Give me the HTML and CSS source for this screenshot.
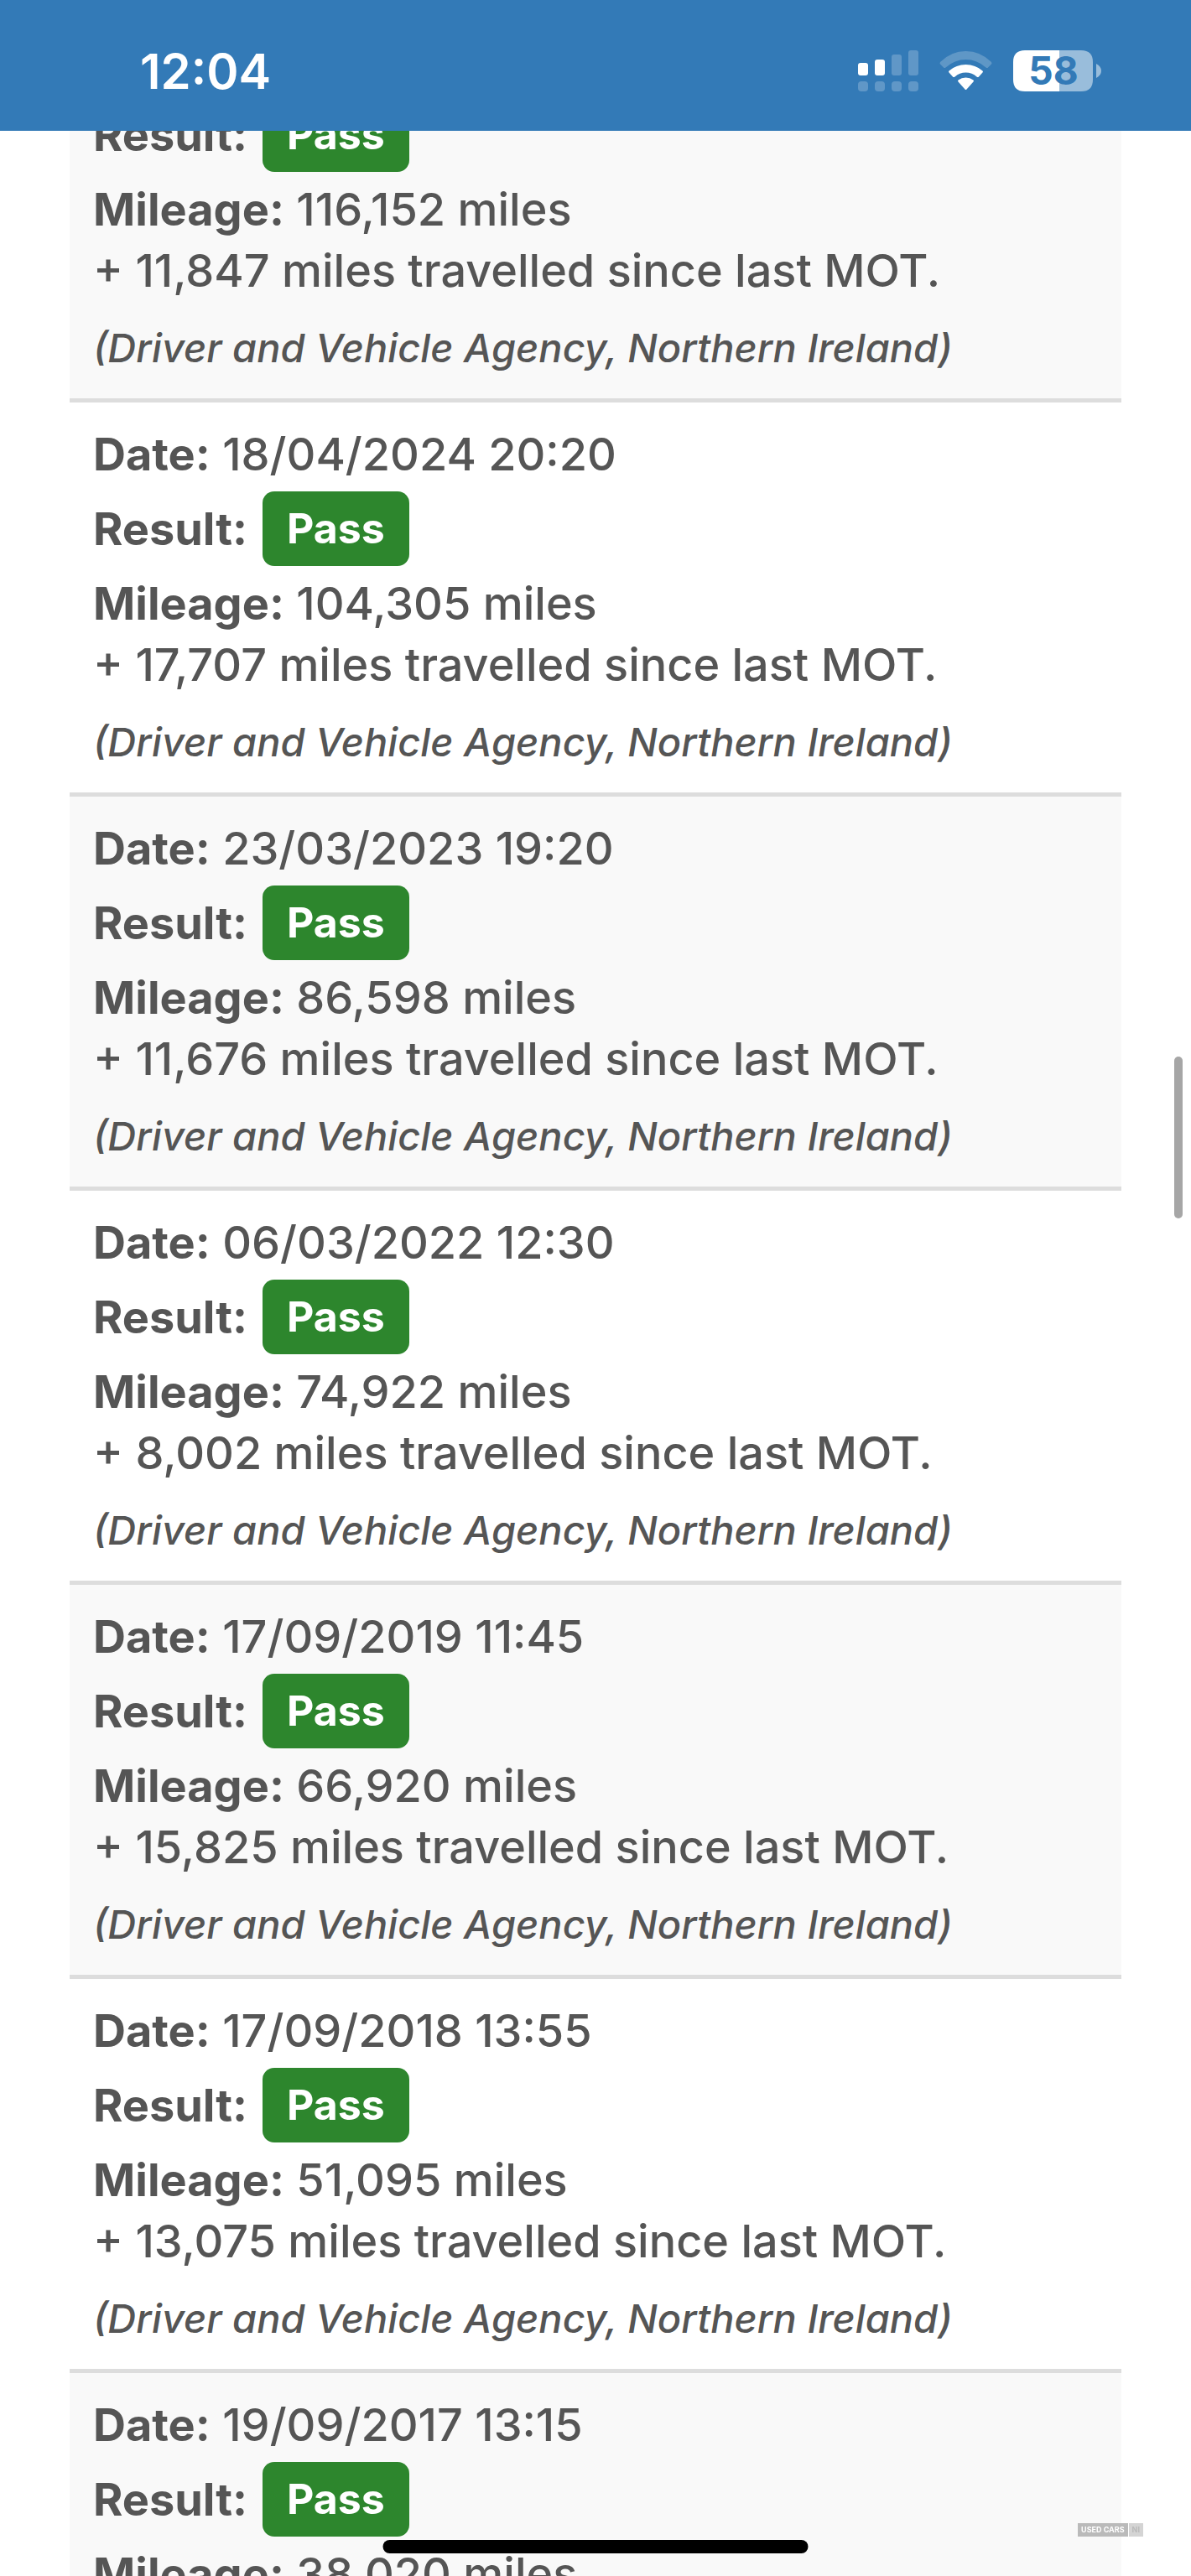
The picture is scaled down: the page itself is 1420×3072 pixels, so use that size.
FILE: index.html
```
<!DOCTYPE html>
<html lang="en">
<head>
  <meta charset="UTF-8">
  <meta name="viewport" content="width=device-width, initial-scale=1">
  <title>MOT History</title>
  <link rel="stylesheet" href="styles.css">
</head>
<body>
  <header class="status-bar">
    <time class="clock">12:04</time>
    <svg class="status-icons" width="290" height="62" viewBox="0 -6 290 62" role="img" aria-label="Signal, Wi-Fi, battery 58%">
      <!-- signal -->
      <g fill="#fff">
        <rect x="0" y="15" width="12" height="15" rx="3"/>
        <rect x="20" y="11" width="12" height="19" rx="3"/>
        <g opacity=".22">
          <rect x="40" y="5" width="12" height="25" rx="3"/>
          <rect x="60" y="0" width="12" height="30" rx="3"/>
          <rect x="0" y="37" width="12" height="12" rx="4"/>
          <rect x="20" y="37" width="12" height="12" rx="4"/>
          <rect x="40" y="37" width="12" height="12" rx="4"/>
          <rect x="60" y="37" width="12" height="12" rx="4"/>
        </g>
      </g>
      <!-- wifi -->
      <path d="M98 16.500Q97 15.500 98 14Q111 1 128.500 1Q146 1 159 14Q160 15.500 159 16.500L155 20.500Q154 21.500 152.500 20.500Q142 11 128.500 11Q115 11 104.500 20.500Q103 21.500 102 20.500Z" fill="#fff" opacity=".22"/>
      <path d="M108.500 26.500Q107.500 25.500 108.500 24.500Q117 17 128.500 17Q140 17 148.500 24.500Q149.500 25.500 148.500 26.500L144 31.500Q143 32.500 141.500 31.500Q136 26.500 128.500 26.500Q121 26.500 115.500 31.500Q114 32.500 113 31.500Z" fill="#fff"/>
      <path d="M119.500 37.500Q118.500 36.500 119.500 35.500Q123.500 32.500 128.500 32.500Q133.500 32.500 137.500 35.500Q138.500 36.500 137.500 37.500L129.500 46.500Q128.500 47.500 127.500 46.500Z" fill="#fff"/>
      <!-- battery -->
      <path d="M240 0H266Q280 0 280 14V35Q280 49 266 49H240Z" fill="#fff" opacity=".5"/>
      <path d="M240 0H199Q185 0 185 14V35Q185 49 199 49H240Z" fill="#fff"/>
      <path d="M284 16Q290 19 290 24.500Q290 30 284 33Z" fill="#fff" opacity=".5"/>
      <text class="battery-level" x="233" y="41" text-anchor="middle">58</text>
    </svg>
  </header>

  <main class="page">
    <ul class="mot-list">
      <li>
        <div class="result"><b>Result:</b> <span class="badge">Pass</span></div>
        <div><b>Mileage:</b> 116,152 miles</div>
        <div>+ 11,847 miles travelled since last MOT.</div>
        <p class="source">(Driver and Vehicle Agency, Northern Ireland)</p>
      </li>
      <li>
        <div><b>Date:</b> 18/04/2024 20:20</div>
        <div class="result"><b>Result:</b> <span class="badge">Pass</span></div>
        <div><b>Mileage:</b> 104,305 miles</div>
        <div>+ 17,707 miles travelled since last MOT.</div>
        <p class="source">(Driver and Vehicle Agency, Northern Ireland)</p>
      </li>
      <li>
        <div><b>Date:</b> 23/03/2023 19:20</div>
        <div class="result"><b>Result:</b> <span class="badge">Pass</span></div>
        <div><b>Mileage:</b> 86,598 miles</div>
        <div>+ 11,676 miles travelled since last MOT.</div>
        <p class="source">(Driver and Vehicle Agency, Northern Ireland)</p>
      </li>
      <li>
        <div><b>Date:</b> 06/03/2022 12:30</div>
        <div class="result"><b>Result:</b> <span class="badge">Pass</span></div>
        <div><b>Mileage:</b> 74,922 miles</div>
        <div>+ 8,002 miles travelled since last MOT.</div>
        <p class="source">(Driver and Vehicle Agency, Northern Ireland)</p>
      </li>
      <li>
        <div><b>Date:</b> 17/09/2019 11:45</div>
        <div class="result"><b>Result:</b> <span class="badge">Pass</span></div>
        <div><b>Mileage:</b> 66,920 miles</div>
        <div>+ 15,825 miles travelled since last MOT.</div>
        <p class="source">(Driver and Vehicle Agency, Northern Ireland)</p>
      </li>
      <li>
        <div><b>Date:</b> 17/09/2018 13:55</div>
        <div class="result"><b>Result:</b> <span class="badge">Pass</span></div>
        <div><b>Mileage:</b> 51,095 miles</div>
        <div>+ 13,075 miles travelled since last MOT.</div>
        <p class="source">(Driver and Vehicle Agency, Northern Ireland)</p>
      </li>
      <li>
        <div><b>Date:</b> 19/09/2017 13:15</div>
        <div class="result"><b>Result:</b> <span class="badge">Pass</span></div>
        <div><b>Mileage:</b> 38,020 miles</div>
      </li>
    </ul>
  </main>

  <div class="scroll-thumb"></div>
  <div class="watermark"><span>USED CARS</span><span class="ni">NI</span></div>
  <div class="home-indicator"></div>
</body>
</html>
```

FILE: styles.css
```
* {
  box-sizing: border-box;
}
body {
  margin: 0;
  background: #fff;
  color: #555;
  font-family: Inter, "Open Sans", sans-serif;
  font-size: 54px;
  font-weight: 500;
  line-height: 73px;
}
.status-bar {
  position: fixed;
  top: 0;
  left: 0;
  right: 0;
  z-index: 2;
  display: flex;
  align-items: center;
  justify-content: space-between;
  height: 156px;
  padding: 14px 107px 0 167px;
  background: #337ab7;
  color: #fff;
}
.clock {
  font-size: 58px;
  font-weight: 600;
}
.battery-level {
  font-size: 46px;
  font-weight: 700;
  line-height: 46px;
  fill: #337ab7;
}

/* MOT records */
.page {
  height: 100vh;
  overflow: hidden;
  padding: 78px 83px 0;
}
.mot-list {
  list-style: none;
  margin: 0;
  padding: 0;
}
.mot-list li {
  padding: 25px 28px 24px;
  border-top: 5px solid #ddd;
}
.mot-list li:nth-child(odd) {
  background: #f9f9f9;
}
.mot-list b {
  font-weight: 700;
}
.result {
  display: flex;
  align-items: center;
  gap: 18px;
  margin: 8px 0;
}
.badge {
  padding: 8px 29px;
  border-radius: 14px;
  background: #2d862d;
  color: #fff;
  font-size: 50px;
  font-weight: 700;
}
.source {
  margin: 20px 0 0;
  font-size: 47px;
  font-style: italic;
  line-height: 72px;
}

/* overlays */
.scroll-thumb {
  position: fixed;
  top: 41%;
  right: 10px;
  width: 10px;
  height: 193px;
  border-radius: 5px;
  background: #a6a6a6;
}
.watermark {
  position: fixed;
  right: 57px;
  bottom: 47px;
  display: flex;
  gap: 1px;
  font-size: 9px;
  font-weight: 700;
  line-height: 16px;
  color: #fff;
}
.watermark span {
  padding: 0 4px;
  background: #bababa;
}
.watermark .ni {
  background: #d4d4d4;
  color: #bababa;
}
.home-indicator {
  position: fixed;
  bottom: 27px;
  left: 50%;
  width: 507px;
  height: 16px;
  border-radius: 8px;
  background: #000;
  transform: translateX(-50%);
}
```
